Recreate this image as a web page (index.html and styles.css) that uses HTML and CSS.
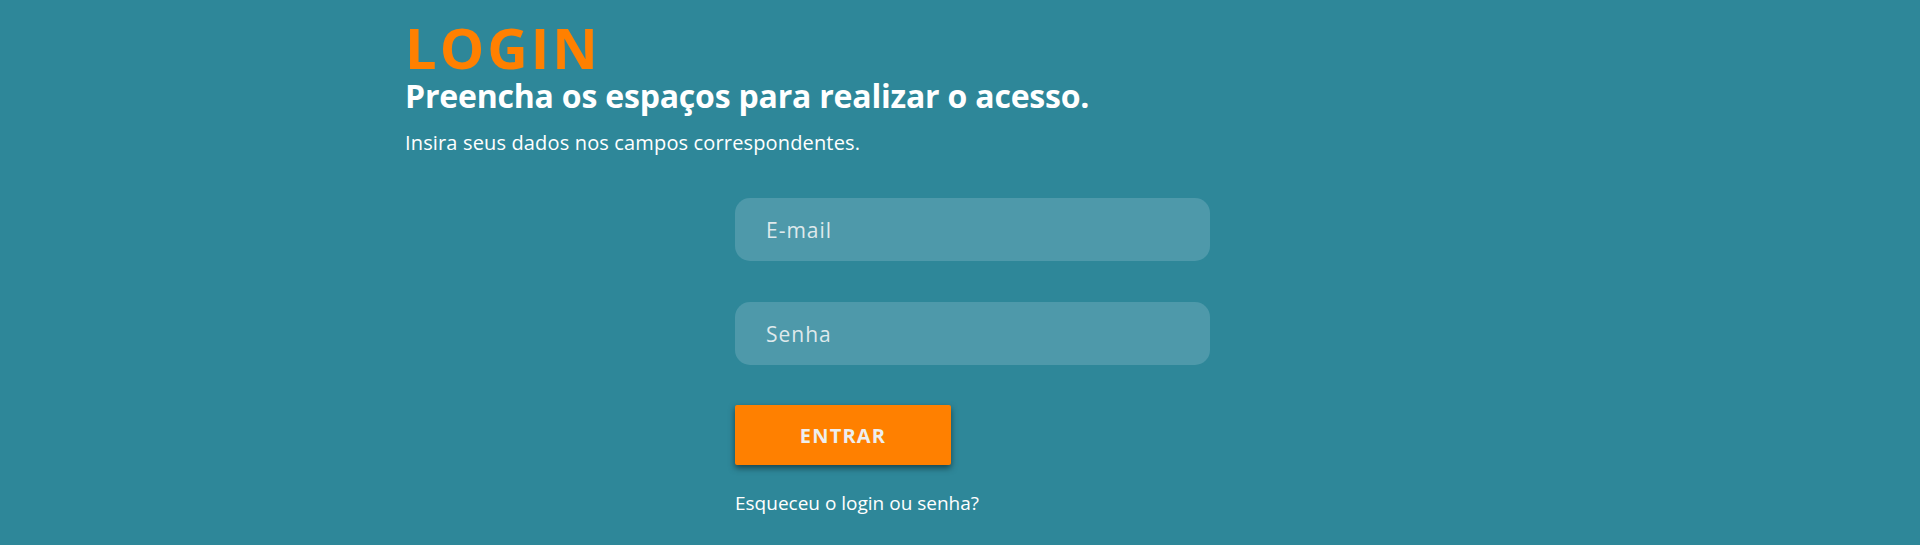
FILE: index.html
```html
<!DOCTYPE html>
<html lang="pt-BR">
<head>
<meta charset="utf-8">
<title>Login</title>
<link rel="stylesheet" href="styles.css">
</head>
<body>
<main class="container">
  <h1 class="title">LOGIN</h1>
  <h2 class="subtitle">Preencha os espaços para realizar o acesso.</h2>
  <p class="lead">Insira seus dados nos campos correspondentes.</p>
  <form class="login-form">
    <input class="field" type="email" placeholder="E-mail">
    <input class="field" type="password" placeholder="Senha">
    <button class="btn-enter" type="button">ENTRAR</button>
    <a class="forgot" href="#">Esqueceu o login ou senha?</a>
  </form>
</main>
</body>
</html>
```

FILE: styles.css
```css
* { box-sizing: border-box; }

html, body {
  margin: 0;
  padding: 0;
}

body {
  background: #2e8799;
  height: 545px;
  overflow: hidden;
  font-family: "Open Sans", "Noto Sans", sans-serif;
  color: #ffffff;
}

.container {
  width: 1110px;
  margin: 0 auto;
  padding-top: 19px;
}

.title {
  margin: 0;
  font-family: "Open Sans", sans-serif;
  font-weight: 700;
  font-size: 56px;
  line-height: 56px;
  letter-spacing: 3px;
  color: #ff8000;
}

.subtitle {
  margin: 1px 0 0 0;
  font-family: "Open Sans", sans-serif;
  font-weight: 700;
  font-size: 32px;
  line-height: 40px;
  letter-spacing: -0.2px;
  color: #ffffff;
}

.lead {
  margin: 14px 0 0 0;
  font-size: 20px;
  line-height: 26px;
  letter-spacing: 0.15px;
  color: #ffffff;
}

.login-form {
  margin: 42px 0 0 330px;
  width: 475px;
  display: flex;
  flex-direction: column;
  align-items: flex-start;
}

.field {
  width: 475px;
  height: 63px;
  border: 0;
  border-radius: 15px;
  background: #4e99aa;
  padding: 0 0 0 31px;
  font-family: "Open Sans", sans-serif;
  font-size: 21px;
  letter-spacing: 1px;
  color: #ffffff;
  outline: none;
}

.field + .field {
  margin-top: 41px;
}

.field::placeholder {
  color: #dfe9ec;
}

.btn-enter {
  margin-top: 40px;
  width: 216px;
  height: 60px;
  border: 0;
  border-radius: 2px;
  background: #ff8000;
  box-shadow: 0 3px 6px rgba(0, 0, 0, 0.5);
  font-family: "Open Sans", sans-serif;
  font-weight: 700;
  font-size: 20px;
  letter-spacing: 1.2px;
  color: #eeeeee;
  cursor: pointer;
}

.forgot {
  margin-top: 26px;
  font-size: 19px;
  line-height: 24px;
  color: #ffffff;
  text-decoration: none;
}
```
